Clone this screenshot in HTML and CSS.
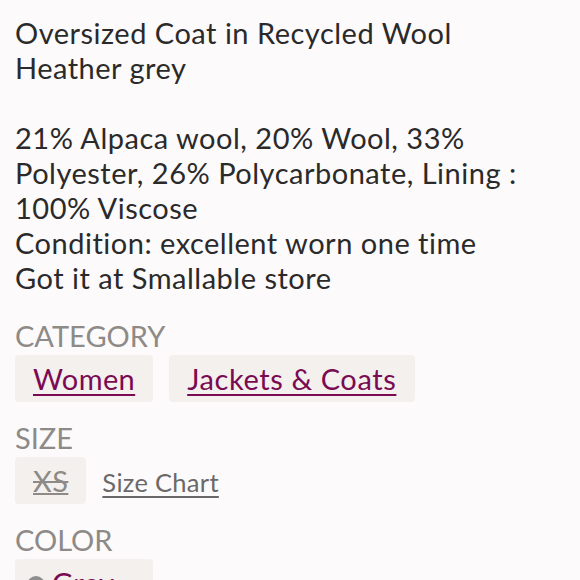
FILE: index.html
```html
<!DOCTYPE html>
<html lang="en">
<head>
<meta charset="utf-8">
<title>Listing details</title>
<link rel="stylesheet" href="styles.css">
</head>
<body>
<main class="listing">
  <div class="desc">
    <p class="line">Oversized Coat in Recycled Wool</p>
    <p class="line">Heather grey</p>
    <p class="line blank">&nbsp;</p>
    <p class="line">21% Alpaca wool, 20% Wool, 33% Polyester, 26% Polycarbonate, Lining : 100% Viscose</p>
    <p class="line">Condition: excellent worn one time</p>
    <p class="line">Got it at Smallable store</p>
  </div>

  <section class="group">
    <h2 class="label">CATEGORY</h2>
    <div class="chips">
      <a class="chip link" href="#">Women</a>
      <a class="chip link wide" href="#">Jackets &amp; Coats</a>
    </div>
  </section>

  <section class="group">
    <h2 class="label">SIZE</h2>
    <div class="chips">
      <span class="chip size">XS</span>
      <a class="size-chart" href="#">Size Chart</a>
    </div>
  </section>

  <section class="group">
    <h2 class="label">COLOR</h2>
    <div class="chips">
      <a class="chip link color" href="#"><span class="dot"></span><span class="color-name">Grey</span></a>
    </div>
  </section>
</main>
</body>
</html>
```

FILE: styles.css
```css
html, body {
  margin: 0;
  padding: 0;
  background: #fcfafb;
}

body {
  font-family: Lato, "Noto Sans", sans-serif;
  color: #2b2a2a;
  height: 580px;
  overflow: hidden;
}

.listing {
  padding: 15px 15px 0 15px;
  width: 520px;
}

.desc {
  font-size: 29px;
  line-height: 35px;
  letter-spacing: 0.5px;
}

.line {
  margin: 0;
}

.group {
  margin-top: 18px;
}

.desc + .group {
  margin-top: 23px;
}

.label {
  margin: 0 0 2px 0;
  font-size: 29px;
  line-height: 35px;
  font-weight: 400;
  color: #8d8a87;
}

.chips {
  display: flex;
  align-items: center;
  gap: 16px;
}

.chip {
  display: inline-flex;
  align-items: center;
  height: 47px;
  padding: 0 18px;
  box-sizing: border-box;
  background: #f3f0ee;
  border-radius: 4px;
  font-size: 29px;
  letter-spacing: 0.4px;
}

.chip.wide {
  padding: 0 19px 0 18px;
  letter-spacing: 0.6px;
}

.link {
  color: #7a0b53;
  text-decoration: underline;
  text-decoration-thickness: 2px;
  text-underline-offset: 4px;
}

.size {
  height: 47px;
  color: #8d8a87;
  text-decoration: underline line-through;
  text-decoration-thickness: 2px;
}

.size-chart {
  font-size: 25.5px;
  letter-spacing: 0.3px;
  color: #6b6967;
  text-decoration: underline;
  text-decoration-thickness: 2px;
  text-underline-offset: 4px;
  padding-top: 3px;
}

.color {
  width: 138px;
  padding-left: 12px;
}

.dot {
  display: inline-block;
  flex: none;
  width: 18px;
  height: 18px;
  border-radius: 50%;
  background: #8e8e8e;
  margin: 4px 7px 0 0;
}
```
